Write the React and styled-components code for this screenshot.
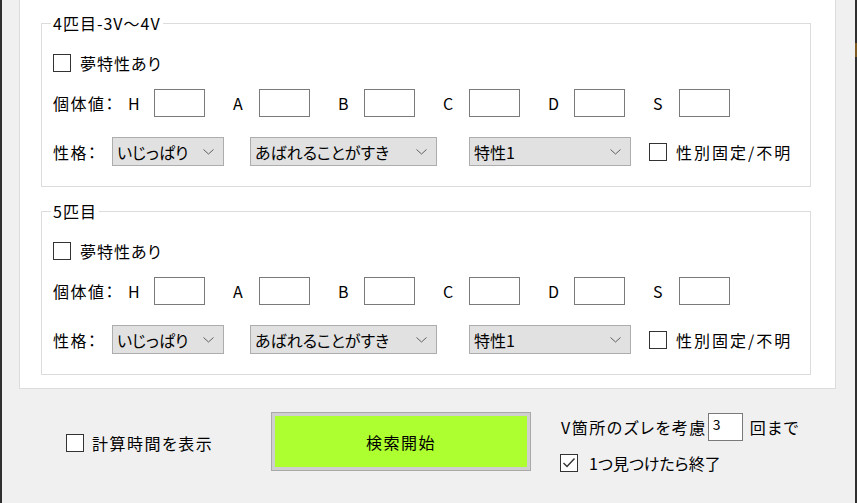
import React from 'react';
import styled, { createGlobalStyle } from 'styled-components';

const Global = createGlobalStyle`
  html, body { margin: 0; padding: 0; }
  body {
    width: 857px; height: 503px; overflow: hidden; background: #f0f0f0;
    font-family: "Noto Sans CJK JP", "Noto Sans", sans-serif;
    font-size: 16px; color: #000;
    letter-spacing: 1.5px;
    font-feature-settings: "palt";
  }
  * { box-sizing: border-box; }
`;

const Window = styled.div`
  display: flex;
  width: 857px;
  height: 503px;
  background: #f0f0f0;
`;

const Edge = styled.div`
  width: 2px;
  flex: none;
  background: #2f2f2f;
  display: flex;
  flex-direction: column;
`;

const EdgeMark = styled.div`
  margin-top: 43px;
  height: 14px;
  background: #7d5a22;
`;

const Main = styled.div`
  flex: 1;
  display: flex;
  flex-direction: column;
`;

const PanelWrap = styled.div`
  padding: 0 19px 0 17px;
`;

const Panel = styled.div`
  background: #fff;
  border: 1px solid #dcdcdc;
  border-top: none;
  padding: 23px 24px 13px 21px;
  display: flex;
  flex-direction: column;
  gap: 24px;
`;

const Group = styled.div`
  position: relative;
  height: 164px;
  border: 1px solid #dcdcdc;
  padding: 29px 0 0 11px;
  display: flex;
  flex-direction: column;
`;

const Legend = styled.div`
  position: absolute;
  top: -11px;
  left: 9px;
  padding: 0 2px;
  background: #fff;
  line-height: 20px;
  font-size: 16px;
  letter-spacing: 1px;
`;

const Row = styled.div`
  display: flex;
  align-items: center;
  height: ${p => p.$h}px;
  margin-top: ${p => p.$mt || 0}px;
`;

const Label = styled.span`
  width: ${p => p.$w}px;
  flex: none;
  line-height: 20px;
  white-space: nowrap;
`;

const Check = styled.label`
  display: inline-flex;
  align-items: center;
  gap: ${p => p.$gap || 8}px;
  line-height: 20px;
  white-space: nowrap;
  letter-spacing: ${p => p.$ls ?? 1.5}px;
`;

const Box = styled.span`
  width: 18px;
  height: 18px;
  flex: none;
  border: 1px solid #333;
  background: #fff;
  display: flex;
  align-items: center;
  justify-content: center;
`;

const TextBox = styled.div`
  width: ${p => p.$w}px;
  height: 28px;
  flex: none;
  border: 1px solid #7a7a7a;
  background: #fff;
  margin-left: ${p => p.$ml || 0}px;
  margin-right: ${p => p.$mr || 0}px;
  font-size: 14px;
  letter-spacing: 0;
  line-height: 20px;
  padding-left: 4px;
`;

const Select = styled.div`
  width: ${p => p.$w}px;
  height: 29px;
  flex: none;
  margin-right: ${p => p.$mr || 0}px;
  background: #e1e1e1;
  border: 1px solid #adadad;
  display: flex;
  align-items: center;
  justify-content: space-between;
  padding: 0 9px 0 4px;
  line-height: 20px;
  white-space: nowrap;
  letter-spacing: 0;
`;

const Footer = styled.div`
  flex: 1;
  display: flex;
  align-items: flex-start;
  padding: 23px 0 0 64px;
`;

const FooterCheck = styled.div`
  width: 205px;
  flex: none;
  margin-top: 21px;
`;

const GoButton = styled.button`
  width: 260px;
  height: 59px;
  flex: none;
  background: #adff2f;
  border: 1px solid #a9a9a9;
  box-shadow: inset 0 0 0 3px #cfcfcf;
  font-family: inherit;
  font-size: 16px;
  letter-spacing: 1.5px;
  font-feature-settings: "palt";
  color: #000;
  padding: 0;
`;

const RightCol = styled.div`
  margin-left: 29px;
  margin-top: 1px;
  display: flex;
  flex-direction: column;
`;

const Line = styled.div`
  display: flex;
  align-items: center;
  height: ${p => p.$h}px;
  margin-top: ${p => p.$mt || 0}px;
  padding-left: ${p => p.$pl || 0}px;
  white-space: nowrap;
`;

const Chevron = () => (
  <svg width="11" height="6" viewBox="0 0 11 6">
    <polyline points="0.5,0.5 5.5,5 10.5,0.5" fill="none" stroke="#606060" strokeWidth="1" />
  </svg>
);

const Tick = () => (
  <svg width="14" height="12" viewBox="0 0 14 12">
    <polyline points="1.5,6 5,9.5 12.5,1.5" fill="none" stroke="#333" strokeWidth="1.4" />
  </svg>
);

const stats = ['H', 'A', 'B', 'C', 'D', 'S'];

const Pokemon = ({ title }) => (
  <Group>
    <Legend>{title}</Legend>
    <Row $h={20}>
      <Check $gap={9} $ls={1}><Box />夢特性あり</Check>
    </Row>
    <Row $h={28} $mt={16}>
      <Label $w={75}>個体値：</Label>
      {stats.map((s, i) => (
        <React.Fragment key={s}>
          <Label $w={26}>{s}</Label>
          <TextBox $w={51} $mr={i < 5 ? 28 : 0} />
        </React.Fragment>
      ))}
    </Row>
    <Row $h={29} $mt={20}>
      <Label $w={59}>性格：</Label>
      <Select $w={112} $mr={26}><span>いじっぱり</span><Chevron /></Select>
      <Select $w={187} $mr={32}><span>あばれることがすき</span><Chevron /></Select>
      <Select $w={162} $mr={18}><span>特性1</span><Chevron /></Select>
      <Check $gap={9} $ls={2}><Box />性別固定/不明</Check>
    </Row>
  </Group>
);

export default function App() {
  return (
    <Window>
      <Global />
      <Edge />
      <Main>
        <PanelWrap>
          <Panel>
            <Pokemon title="4匹目-3V～4V" />
            <Pokemon title="5匹目" />
          </Panel>
        </PanelWrap>
        <Footer>
          <FooterCheck>
            <Check $gap={8}><Box />計算時間を表示</Check>
          </FooterCheck>
          <GoButton>検索開始</GoButton>
          <RightCol>
            <Line $h={28} $pl={1}>
              V箇所のズレを考慮
              <TextBox $w={35} $ml={1} $mr={7}>3</TextBox>
              回まで
            </Line>
            <Line $h={20} $mt={12}>
              <Check $gap={11} $ls={0}><Box><Tick /></Box>1つ見つけたら終了</Check>
            </Line>
          </RightCol>
        </Footer>
      </Main>
      <Edge><EdgeMark /></Edge>
    </Window>
  );
}
